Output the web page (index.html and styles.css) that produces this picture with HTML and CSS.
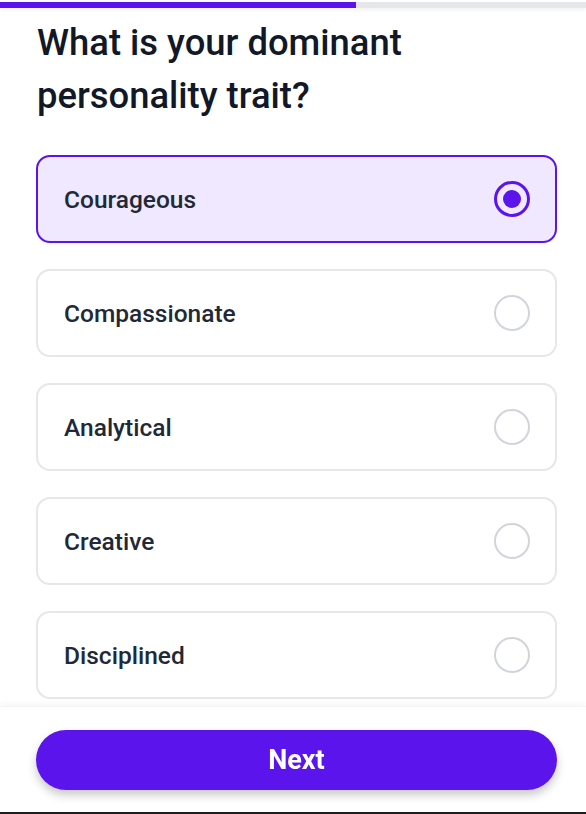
FILE: index.html
```html
<!DOCTYPE html>
<html lang="en">
<head>
<meta charset="utf-8">
<title>Quiz</title>
<link rel="stylesheet" href="styles.css">
</head>
<body>
<div class="progress">
  <div class="progress-fill" style="width: 60.8%"></div>
</div>
<main class="content">
  <h1 class="question">What is your dominant personality trait?</h1>
  <ul class="options">
    <li class="option selected"><span class="label">Courageous</span><span class="radio"></span></li>
    <li class="option"><span class="label">Compassionate</span><span class="radio"></span></li>
    <li class="option"><span class="label">Analytical</span><span class="radio"></span></li>
    <li class="option"><span class="label">Creative</span><span class="radio"></span></li>
    <li class="option"><span class="label">Disciplined</span><span class="radio"></span></li>
  </ul>
</main>
<footer class="footer">
  <button class="next">Next</button>
</footer>
</body>
</html>
```
FILE: styles.css
```css
* { box-sizing: border-box; }
html, body { margin: 0; padding: 0; }
body {
  font-family: Roboto, "Noto Sans", sans-serif;
  background: #ffffff;
  color: #111827;
  height: 814px;
  overflow: hidden;
}
.progress {
  margin-top: 2px;
  height: 6px;
  background: #e5e7eb;
  box-shadow: 0 2px 4px rgba(0,0,0,0.06);
}
.progress-fill {
  height: 100%;
  background: #5b14ec;
}
.content {
  padding: 0 29px 0 36px;
}
.question {
  margin: 8px 0 0 1px;
  font-size: 36.4px;
  font-weight: 500;
  line-height: 53px;
  color: #111827;
  letter-spacing: 0;
}
.options {
  list-style: none;
  margin: 33px 0 0;
  padding: 0;
  display: flex;
  flex-direction: column;
  gap: 26px;
}
.option {
  height: 88px;
  border: 2px solid #e5e7eb;
  border-radius: 14px;
  background: #ffffff;
  display: flex;
  align-items: center;
  justify-content: space-between;
  padding: 0 25px 0 26px;
}
.option.selected {
  border-color: #5b14ec;
  background: #f0e8fe;
}
.label {
  font-size: 24.5px;
  font-weight: 500;
  color: #1f2937;
}
.radio {
  width: 36px;
  height: 36px;
  border-radius: 50%;
  border: 2px solid #d1d5db;
  display: flex;
  align-items: center;
  justify-content: center;
}
.selected .radio {
  border: 3px solid #5b14ec;
}
.selected .radio::after {
  content: "";
  width: 18px;
  height: 18px;
  border-radius: 50%;
  background: #5b14ec;
}
.footer {
  position: fixed;
  left: 0;
  right: 0;
  bottom: 0;
  height: 108px;
  background: #ffffff;
  box-shadow: 0 -3px 6px rgba(0,0,0,0.03);
  border-top: 1px solid #f3f4f6;
  border-bottom: 2px solid #1c1c1c;
  padding: 23px 29px 0 36px;
}
.next {
  display: block;
  width: 100%;
  height: 60px;
  border: none;
  border-radius: 30px;
  background: #5b14ec;
  color: #ffffff;
  font-family: Roboto, "Noto Sans", sans-serif;
  font-size: 27px;
  font-weight: 700;
  box-shadow: 0 5px 10px rgba(0,0,0,0.22);
  cursor: pointer;
}
```
